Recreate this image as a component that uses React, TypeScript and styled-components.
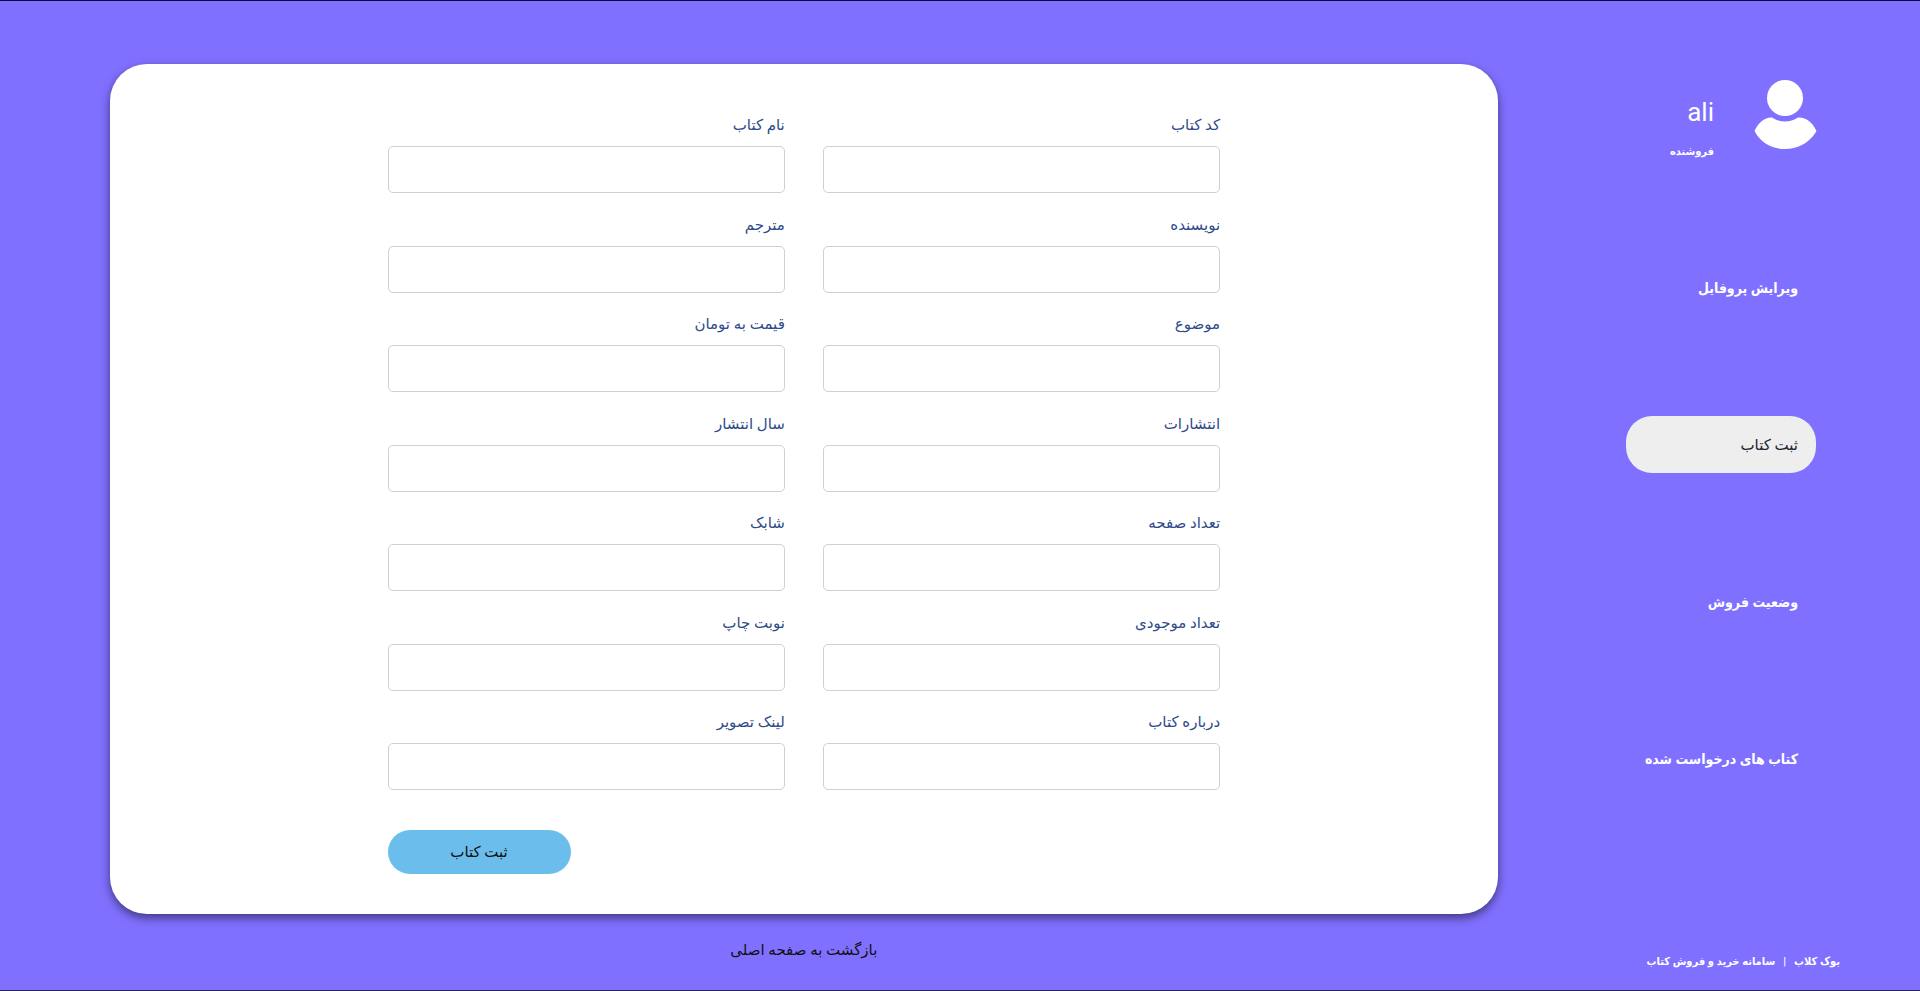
import React from "react";
import styled, { createGlobalStyle } from "styled-components";

const GlobalStyle = createGlobalStyle`
  *, *::before, *::after { box-sizing: border-box; }
  body {
    margin: 0;
    background: #8070ff;
    font-family: Roboto, "DejaVu Sans", sans-serif;
    font-size: 15px;
    line-height: 24px;
  }
  button, input { font: inherit; }
`;

const Page = styled.div`
  display: grid;
  grid-template-columns: 22% 1fr;
  min-height: 100vh;
  border-top: 1px solid #0c0a48;
  border-bottom: 1px solid #2a2358;
`;

const Sidebar = styled.aside`
  display: flex;
  flex-direction: column;
  padding: 76px 80px 16px 0;
  color: #fff;
  font-family: Roboto, "DejaVu Sans Condensed", "DejaVu Sans", sans-serif;
  font-weight: 700;
`;

const Profile = styled.div`
  display: flex;
  gap: 40px;
  padding-right: 23px;
`;

const Avatar = styled.svg`
  width: 63px;
  height: 76px;
  flex: none;
`;

const Identity = styled.div`
  display: flex;
  flex-direction: column;
  gap: 15px;
  padding-top: 19px;
`;

const UserName = styled.strong`
  font-size: 26px;
  line-height: 32px;
  font-weight: 400;
`;

const Role = styled.span`
  font-size: 11px;
  line-height: 18px;
`;

const Menu = styled.nav`
  display: flex;
  flex-direction: column;
  gap: 100px;
  width: 214px;
  margin-top: 98px;
  padding-right: 24px;
`;

const MenuLink = styled.a<{ $active?: boolean }>`
  display: flex;
  align-items: center;
  height: 57px;
  padding: 0 18px;
  border-radius: 26px;
  font-family: Roboto, ${(p) => (p.$active ? "" : '"DejaVu Sans Condensed",')} "DejaVu Sans", sans-serif;
  font-size: ${(p) => (p.$active ? 15 : 14)}px;
  white-space: nowrap;
  text-decoration: none;
  color: ${(p) => (p.$active ? "#1d2330" : "#fff")};
  background: ${(p) => (p.$active ? "#eee" : "transparent")};
  font-weight: ${(p) => (p.$active ? 400 : 700)};
`;

const Copyright = styled.footer`
  display: flex;
  gap: 8px;
  margin-top: auto;
  font-size: 11px;
  line-height: 24px;
  white-space: nowrap;
`;

const Main = styled.main`
  display: flex;
  flex-direction: column;
  align-items: center;
  padding: 63px 0 28px 110px;
`;

const Card = styled.form`
  display: flex;
  flex: 1;
  flex-direction: column;
  align-items: center;
  width: 100%;
  padding: 49px 0 40px;
  border-radius: 37px;
  background: #fff;
  box-shadow: 0 4px 10px rgba(0, 0, 0, 0.5);
`;

const Fields = styled.div`
  display: grid;
  flex: 1;
  grid-template-columns: 1fr 1fr;
  align-content: space-between;
  column-gap: 38px;
  row-gap: 8px;
  width: 60%;
`;

const Field = styled.div`
  display: flex;
  flex-direction: column;
  gap: 9px;
`;

const Label = styled.label`
  color: #2f4a8a;
`;

const Input = styled.input`
  width: 100%;
  height: 47px;
  padding: 0 12px;
  border: 1px solid #ced0d2;
  border-radius: 5px;
  background: #fff;
`;

const Actions = styled.div`
  display: flex;
  justify-content: flex-end;
  width: 60%;
  margin-top: 40px;
`;

const SubmitButton = styled.button`
  width: 183px;
  height: 44px;
  border: 0;
  border-radius: 22px;
  background: #6bbeeb;
  color: #111;
`;

const HomeLink = styled.a`
  margin-top: 24px;
  color: #111;
  text-decoration: none;
`;

const fields = [
  { id: "code", label: "کد کتاب" },
  { id: "title", label: "نام کتاب" },
  { id: "author", label: "نویسنده" },
  { id: "translator", label: "مترجم" },
  { id: "subject", label: "موضوع" },
  { id: "price", label: "قیمت به تومان" },
  { id: "publisher", label: "انتشارات" },
  { id: "year", label: "سال انتشار" },
  { id: "pages", label: "تعداد صفحه" },
  { id: "isbn", label: "شابک" },
  { id: "stock", label: "تعداد موجودی" },
  { id: "edition", label: "نوبت چاپ" },
  { id: "about", label: "درباره کتاب" },
  { id: "image", label: "لینک تصویر" },
];

const menu = [
  { label: "ویرایش پروفایل" },
  { label: "ثبت کتاب", active: true },
  { label: "وضعیت فروش" },
  { label: "کتاب های درخواست شده" },
];

export default function App() {
  return (
    <>
      <GlobalStyle />
      <Page dir="rtl" lang="fa">
        <Sidebar>
          <Profile>
            <Avatar viewBox="0 0 63 76" fill="#fff" aria-hidden="true">
              <circle cx="31" cy="21" r="18" />
              <path d="M18 40.500Q24 44.500 31 44.500Q38 44.500 44 40.500C52 40 58 45 62 53Q62.500 54 62 55C54 67 43 72 31 72C19 72 8 67 1 55Q0.500 54 1 53C5 45 11 40 18 40.500Z" />
            </Avatar>
            <Identity>
              <UserName>ali</UserName>
              <Role>فروشنده</Role>
            </Identity>
          </Profile>
          <Menu>
            {menu.map((item) => (
              <MenuLink key={item.label} href="#" $active={item.active}>
                {item.label}
              </MenuLink>
            ))}
          </Menu>
          <Copyright>
            <span>بوک کلاب</span>
            <span>|</span>
            <span>سامانه خرید و فروش کتاب</span>
          </Copyright>
        </Sidebar>
        <Main>
          <Card onSubmit={(e) => e.preventDefault()}>
            <Fields>
              {fields.map((f) => (
                <Field key={f.id}>
                  <Label htmlFor={f.id}>{f.label}</Label>
                  <Input id={f.id} name={f.id} />
                </Field>
              ))}
            </Fields>
            <Actions>
              <SubmitButton type="submit">ثبت کتاب</SubmitButton>
            </Actions>
          </Card>
          <HomeLink href="#">بازگشت به صفحه اصلی</HomeLink>
        </Main>
      </Page>
    </>
  );
}
